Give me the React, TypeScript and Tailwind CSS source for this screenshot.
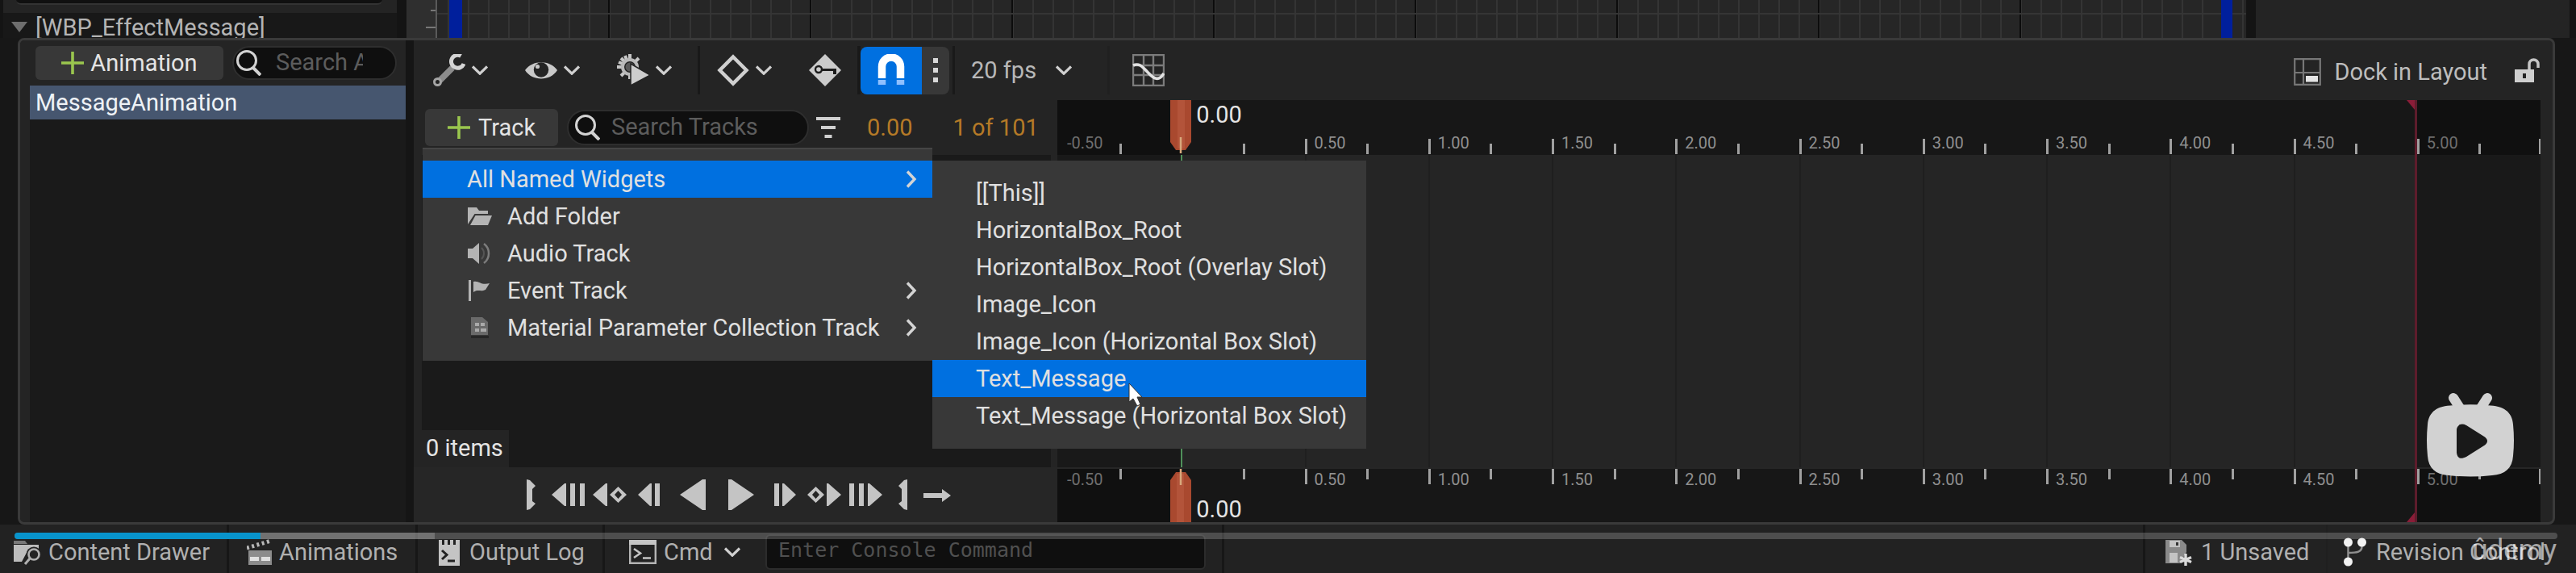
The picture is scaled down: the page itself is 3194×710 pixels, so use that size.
import React from "react";

type IconProps = { className?: string };

const Chevron = ({ className = "" }: IconProps) => (
  <svg viewBox="0 0 20 12" className={`h-3 w-5 shrink-0 ${className}`} fill="none" stroke="#d0d0d0" strokeWidth="3.2">
    <path d="M1 1.5 10 10.2 19 1.5" />
  </svg>
);

const ChevronRight = () => (
  <svg viewBox="0 0 16 22" className="h-[22px] w-4 shrink-0" fill="none" stroke="#d4d4d4" strokeWidth="3.4">
    <path d="M3 1.5 12 11 3 20.5" />
  </svg>
);

const Plus = () => (
  <svg viewBox="0 0 28 28" className="size-7 shrink-0" stroke="#9ac64e" strokeWidth="3.6">
    <path d="M14 0v28M0 14h28" />
  </svg>
);

const Magnifier = () => (
  <svg viewBox="0 0 32 32" className="size-8 shrink-0" fill="none" stroke="#d2d2d2" strokeWidth="3">
    <circle cx="14" cy="13" r="11.5" />
    <path d="M21.5 21.5 31 31" strokeWidth="4" />
  </svg>
);

const Wrench = () => (
  <svg viewBox="0 0 40 40" className="size-10 shrink-0" fill="none">
    <path d="M24 17 8 33" stroke="#8d8d8d" strokeWidth="7.5" />
    <circle cx="5.5" cy="34.5" r="4" stroke="#a5a5a5" strokeWidth="3" fill="#242424" />
    <path d="M34.5 2.3A8 8 0 1 0 38 12" stroke="#d4d4d4" strokeWidth="5" />
  </svg>
);

const Eye = () => (
  <svg viewBox="0 0 40 40" className="size-10 shrink-0">
    <path d="M0 20C9 7 31 7 40 20 31 34 9 34 0 20Z" fill="#c9c9c9" />
    <circle cx="20" cy="19.5" r="9.2" fill="#242424" />
    <circle cx="15.5" cy="15.5" r="2.6" fill="#c9c9c9" />
  </svg>
);

const GearPlay = () => (
  <svg viewBox="0 0 40 40" className="size-10 shrink-0">
    <g stroke="#c6c6c6" strokeWidth="4">
      <path d="M16 0v7M16 25v6M0 16h7M5 5l4 4M27 5l-4 4M5 27l4-4M2 10l5 2M10 2l2 5" />
    </g>
    <circle cx="16" cy="16" r="9" fill="none" stroke="#b9b9b9" strokeWidth="4" />
    <circle cx="16" cy="16" r="5.5" fill="#5a5a5a" />
    <path d="M17 12 41 26 17 39Z" fill="#cdcdcd" stroke="#242424" strokeWidth="1.5" />
  </svg>
);

const Diamond = () => (
  <svg viewBox="0 0 40 40" className="size-10 shrink-0" fill="none" strokeWidth="4.5">
    <path d="M20 3.5 36.5 20 20 36.5 3.5 20Z" stroke="#d0d0d0" />
  </svg>
);

const KeyDiamond = () => (
  <svg viewBox="0 0 40 40" className="size-10 shrink-0">
    <path d="M20 0 40 20 20 40 0 20Z" fill="#cbcbcb" />
    <circle cx="12" cy="19" r="4" fill="none" stroke="#1c1c1c" strokeWidth="2.4" />
    <path d="M16 18h18v7h-4v-4H16Z" fill="#1c1c1c" />
  </svg>
);

const Magnet = () => (
  <svg viewBox="0 0 34 40" className="h-10 w-[34px]" fill="none" strokeWidth="9.5">
    <path d="M5.5 30V15.500a11.500 11.500 0 0 1 23 0V30" stroke="#fff" />
    <path d="M5.5 32v6M28.500 32v6" stroke="#8fc0ff" />
  </svg>
);

const CurveGrid = () => (
  <svg viewBox="0 0 40 40" className="size-10" fill="none">
    <path d="M1 1h38v38H1ZM14 1v38M26 1v38M1 14h38M1 26h38" stroke="#7c7c7c" strokeWidth="2.4" />
    <path d="M1 14C10 10 14 18 20 23.500 27 31 33 34 39 24" stroke="#e2e2e2" strokeWidth="3.600" />
  </svg>
);

const Filter = () => (
  <svg viewBox="0 0 30 26" className="h-[26px] w-[30px]" fill="#d0d0d0">
    <path d="M0 0h30v4H0ZM6 11h18v4H6ZM10.500 22h9v4h-9Z" />
  </svg>
);

const DockIcon = () => (
  <svg viewBox="0 0 34 34" className="size-[34px]">
    <path d="M1.200 1.200h31.600v31.600H1.200ZM12 1v32M1 18h32" fill="none" stroke="#777" strokeWidth="2.200" />
    <path d="M15 22h15v7.500H15Z" fill="#e4e4e4" />
  </svg>
);

const Unlock = () => (
  <svg viewBox="0 0 32 32" className="size-8">
    <path d="M18 16V8.500a5.500 5.500 0 0 1 11 0V13" fill="none" stroke="#c6c6c6" strokeWidth="3.500" />
    <path d="M0 15h24v16H0Z" fill="#cfcfcf" />
    <path d="M10 20h4v6h-4Z" fill="#242424" />
  </svg>
);

const FolderOpen = () => (
  <svg viewBox="0 0 30 24" className="h-6 w-[30px]" fill="#b4b4b4">
    <path d="M0 22V1h11l3 4h11v4H8.500Z" />
    <path d="M9.500 11H30l-5 12H3Z" />
  </svg>
);

const Speaker = () => (
  <svg viewBox="0 0 30 26" className="h-[26px] w-[30px]">
    <path d="M0 7h6l8-7v26l-8-7H0Z" fill="#b4b4b4" />
    <path d="M17 6c4 4 4 10 0 14" fill="none" stroke="#555" strokeWidth="2" />
    <path d="M20 1c8 6 8 18 0 24" fill="none" stroke="#7c7c7c" strokeWidth="2.500" />
  </svg>
);

const Flag = () => (
  <svg viewBox="0 0 30 26" className="h-[26px] w-[30px]" fill="#b4b4b4">
    <path d="M1 0h3v26H1ZM7 2c7-2 9 5 20 2l-5 8c-6 3-9-1-15 3Z" />
  </svg>
);

const ParamFile = () => (
  <svg viewBox="0 0 30 26" className="h-[26px] w-[30px]">
    <path d="M4 0h14l7 6v16H4Z" fill="#6a6a6a" />
    <path d="M9 7h5v4H9ZM16 7h5v4h-5ZM9 14h5v4H9ZM16 14h7v4h-7Z" fill="#aaa" />
    <path d="M4 23h22v3H4Z" fill="#262626" />
  </svg>
);

const DrawerIcon = () => (
  <svg viewBox="0 0 34 34" className="size-[34px]">
    <path d="M0 3h14l3 4H0Z" fill="#777" />
    <path d="M0 8h31v6H18L10 29H0Z" fill="#bdbdbd" />
    <circle cx="25" cy="20" r="9.500" fill="#232323" />
    <circle cx="25" cy="20" r="6.500" fill="none" stroke="#b0b0b0" strokeWidth="2.600" />
    <path d="M20 25l-6 7" stroke="#b0b0b0" strokeWidth="3" />
  </svg>
);

const Clapper = () => (
  <svg viewBox="0 0 32 34" className="h-[34px] w-8">
    <path d="M0 12 30 3" stroke="#b8b8b8" strokeWidth="5" strokeDasharray="3 3.500" />
    <path d="M2 15h29v18H2Z" fill="#8c8c8c" />
    <path d="M4 23h11v5H4ZM18 23h11v5H18Z" fill="#e0e0e0" />
  </svg>
);

const LogIcon = () => (
  <svg viewBox="0 0 26 34" className="h-[34px] w-[26px]">
    <path d="M0 2h4v6h3V2h4v6h3V2h4v6h3V2h5v32H0Z" fill="#c4c4c4" />
    <path d="M4 15l6 5.500L4 26M11 28h9" fill="none" stroke="#222" strokeWidth="3" />
  </svg>
);

const Terminal = () => (
  <svg viewBox="0 0 34 30" className="h-[30px] w-[34px]" fill="none">
    <path d="M1.200 1.200h31.600v27.600H1.200Z" stroke="#b4b4b4" strokeWidth="2.400" />
    <path d="M0 0h34v6H0Z" fill="#c4c4c4" />
    <path d="M6 11l8 5.500L6 22M17 22.500h10" stroke="#c4c4c4" strokeWidth="2.600" />
  </svg>
);

const SaveIcon = () => (
  <svg viewBox="0 0 34 34" className="size-[34px]">
    <path d="M0 2h20l6 6v9l-8 14H0Z" fill="#8a8a8a" />
    <path d="M5 3h13v8H5ZM5 18h10v12H5Z" fill="#c4c4c4" />
    <path d="M13 5h3v4h-3Z" fill="#333" />
    <path d="M25 19v15M18 23.500l14 6M32 23.500l-14 6" stroke="#dadada" strokeWidth="3.400" />
  </svg>
);

const Branch = () => (
  <svg viewBox="0 0 28 36" className="h-9 w-7">
    <path d="M5.500 6v24M22.500 6v5c0 7-6 8-17 8" fill="none" stroke="#8e8e8e" strokeWidth="2.500" />
    <circle cx="5.500" cy="6" r="5.500" fill="#f2f2f2" />
    <circle cx="22.500" cy="6" r="5.500" fill="#f2f2f2" />
    <circle cx="5.500" cy="30" r="5.500" fill="#f2f2f2" />
  </svg>
);

const transport = [
  { label: "Set start", gap: "ml-0", w: 11, d: "M0 0 4 1 11 8 7 12V27L11 30 4 37 0 38Z" },
  { label: "To front", gap: "ml-5", w: 41, d: "M18 5V33L16 33 0 19 16 5ZM23 5h6v28h-6ZM35 5h6v28h-6Z" },
  { label: "Previous key", gap: "ml-2.5", w: 42, d: "M18 5V33L16 33 0 19 16 5ZM31.500 9 42 19 31.500 29 21 19ZM31.500 14 27 19 31.500 24 36 19Z" },
  { label: "Step back", gap: "ml-3.5", w: 28, d: "M17 5V33L15 33 0 19 15 5ZM21 5h6v28h-6Z" },
  { label: "Play backwards", gap: "ml-6", w: 32, d: "M32 0V38L28 38 0 19 28 0Z" },
  { label: "Play", gap: "ml-7", w: 32, d: "M0 0V38L4 38 32 19 4 0Z" },
  { label: "Step forward", gap: "ml-6", w: 28, d: "M11 5V33L13 33 28 19 13 5ZM1 5h6v28H1Z" },
  { label: "Next key", gap: "ml-3.5", w: 42, d: "M24 5V33L26 33 42 19 26 5ZM10.500 9 21 19 10.500 29 0 19ZM10.500 14 6 19 10.500 24 15 19Z" },
  { label: "To end", gap: "ml-2.5", w: 41, d: "M23 5V33L25 33 41 19 25 5ZM0 5h6v28H0ZM12 5h6v28h-6Z" },
  { label: "Set end", gap: "ml-5", w: 11, d: "M11 0 7 1 0 8 4 12V27L0 30 7 37 11 38Z" },
  { label: "No looping", gap: "ml-5", w: 34, d: "M0 17h23v-5l11 8-11 8v-5H0Z" },
];

const ToolButton = ({ label, children }: { label: string; children: React.ReactNode }) => (
  <button aria-label={label} className="flex items-center gap-2">
    {children}
    <Chevron />
  </button>
);

const trackMenu = [
  { text: "Add Folder", icon: <FolderOpen />, sub: false },
  { text: "Audio Track", icon: <Speaker />, sub: false },
  { text: "Event Track", icon: <Flag />, sub: true },
  { text: "Material Parameter Collection Track", icon: <ParamFile />, sub: true },
];

const widgets = [
  "[[This]]",
  "HorizontalBox_Root",
  "HorizontalBox_Root (Overlay Slot)",
  "Image_Icon",
  "Image_Icon (Horizontal Box Slot)",
  "Text_Message",
  "Text_Message (Horizontal Box Slot)",
];

const Menus = () => (
  <div className="absolute top-[59px] left-[11px] z-20 flex items-start text-[#e0e0e0]">
    <div role="menu" aria-label="Add track" className="w-[632px] border-t-2 border-[#454545] bg-[#383838] pt-3.5 pb-[18px]">
      <button role="menuitem" className="flex h-[46px] w-full items-center justify-between bg-[#0070e0] pr-[18px] pl-[55px]">
        All Named Widgets
        <ChevronRight />
      </button>
      {trackMenu.map((m) => (
        <button role="menuitem" key={m.text} className="flex h-[46px] w-full items-center pr-[18px] pl-14">
          {m.icon}
          <span className="ml-[19px] flex-1 text-left">{m.text}</span>
          {m.sub && <ChevronRight />}
        </button>
      ))}
    </div>
    <div role="menu" aria-label="All Named Widgets" className="relative mt-4 w-[538px] bg-[#383838] pt-[17px] pb-[18px]">
      {widgets.map((w) => (
        <button
          role="menuitem"
          key={w}
          className={`flex h-[46px] w-full items-center pl-[54px] ${w === "Text_Message" ? "bg-[#0070e0]" : ""}`}
        >
          {w}
        </button>
      ))}
      <svg viewBox="0 0 18 30" className="absolute top-[275px] left-[243px] h-[30px] w-[18px]">
        <path d="M1 1v23l5-4 5 9 4-2-4-9h6Z" fill="#fff" stroke="#333" strokeWidth="1" />
      </svg>
    </div>
  </div>
);

const times = ["-0.50", "0.00", "0.50", "1.00", "1.50", "2.00", "2.50", "3.00", "3.50", "4.00", "4.50", "5.00"];

const Ruler = ({ bottom = false }: { bottom?: boolean }) => (
  <div className="grid h-[68px] shrink-0 grid-cols-12">
    {times.map((t, i) => {
      const outside = i === 0 || i === 11;
      return (
        <div
          key={t}
          className={`relative flex ${bottom ? "items-start border-t-2 border-[#262626]" : "items-end pb-px"} ${
            outside ? "bg-[#101010]" : "bg-[#171717]"
          }`}
        >
          <div className={`flex w-1/2 ${bottom ? "items-start" : "items-end"}`}>
            <span className={`h-[19px] w-[3px] ${i > 1 ? "bg-[#a0a0a0]" : ""}`} />
            <span className={`pl-[9px] text-[20px] leading-[27px] ${outside ? "text-[#6e6e6e]" : "text-[#8f8f8f]"}`}>
              {i !== 1 && t}
            </span>
          </div>
          <span className="h-[13px] w-[3px] bg-[#a0a0a0]" />
          {i === 11 && <span className="ml-auto h-[19px] w-[2px] bg-[#a0a0a0]" />}
          {i === 1 && (
            <div className={`absolute -left-[13px] z-10 flex gap-1.5 ${bottom ? "top-0 items-end" : "top-0"}`}>
              <svg viewBox="0 0 26 66" className={`h-[66px] w-[26px] ${bottom ? "rotate-180" : ""}`}>
                <path d="M0 0h26v52l-7 10H7L0 52Z" fill="#a9492f" />
                <path d="M9 0h9v60H9Z" fill="#b3543a" />
                <path d="M13 46v20" stroke="#d8a97c" strokeWidth="2.500" />
              </svg>
              <span className={`text-[#e4e4e4] ${bottom ? "" : "pt-0.5"}`}>0.00</span>
            </div>
          )}
        </div>
      );
    })}
  </div>
);

const Timeline = () => (
  <div className="relative flex min-w-0 flex-1 flex-col">
    <Ruler />
    <div className="grid flex-1 grid-cols-12">
      {times.map((t, i) => (
        <div
          key={t}
          className={`border-l-2 ${
            i === 0 || i === 11
              ? "border-transparent bg-[#191919]"
              : i === 1
                ? "border-[#4f8f5a] bg-[#252525]"
                : "border-[#1f1f1f] bg-[#252525]"
          }`}
        />
      ))}
    </div>
    <Ruler bottom />
    <div className="absolute inset-0 z-10 grid grid-cols-12">
      <div className="col-span-11 flex flex-col items-end justify-between border-r-3 border-[#5e1c2c]">
        <svg viewBox="0 0 10 12" className="h-3 w-2.5">
          <path d="M0 0h10v12Z" fill="#8a1d38" />
        </svg>
        <svg viewBox="0 0 10 12" className="h-3 w-2.5">
          <path d="M0 12h10V0Z" fill="#8a1d38" />
        </svg>
      </div>
    </div>
  </div>
);

const AnimationList = () => (
  <div className="flex w-[488px] shrink-0 flex-col border-r-10 border-[#151515] bg-[#242424] pt-[7px]">
    <div className="flex h-[42px] items-center gap-[11px] pr-[11px] pl-[19px]">
      <button className="flex h-[42px] w-[233px] items-center justify-center gap-2 rounded-md bg-[#383838] text-[#e4e4e4]">
        <Plus />
        Animation
      </button>
      <label className="flex h-[42px] min-w-0 flex-1 items-center rounded-full border-2 border-[#2e2e2e] bg-[#0f0f0f] pl-0.5">
        <Magnifier />
        <input
          aria-label="Search Animations"
          placeholder="Search Animations"
          className="ml-[18px] w-[108px] bg-transparent pb-0.5 outline-none placeholder:text-[#5c5c5c]"
        />
      </label>
    </div>
    <ul className="mt-[7px] ml-3 flex-1 bg-[#1a1a1a]">
      <li className="flex h-[42px] items-center bg-[#46566f] pl-[7px] text-[#eef2f6]">MessageAnimation</li>
    </ul>
  </div>
);

const Toolbar = () => (
  <div className="flex h-[74px] shrink-0 items-center pr-[15px] pl-6">
    <div className="flex gap-[46px]">
      <ToolButton label="Actions"><Wrench /></ToolButton>
      <ToolButton label="View options"><Eye /></ToolButton>
      <ToolButton label="Playback options"><GearPlay /></ToolButton>
    </div>
    <span className="mr-[21px] ml-8 h-[60px] w-[3px] bg-[#191919]" />
    <ToolButton label="Keyframe options"><Diamond /></ToolButton>
    <button aria-label="Auto key" className="ml-[46px]"><KeyDiamond /></button>
    <span className="ml-5 h-[60px] w-1 bg-[#191919]" />
    <button aria-label="Snapping" aria-pressed="true" className="flex h-[59px] w-[76px] items-center justify-center rounded-l-lg bg-[#0070e0]">
      <Magnet />
    </button>
    <button aria-label="Snapping options" className="flex h-[59px] w-[34px] items-center justify-center rounded-r-lg bg-[#383838]">
      <svg viewBox="0 0 6 30" className="h-[30px] w-1.5" fill="#d8d8d8">
        <path d="M0 0h6v6H0ZM0 12h6v6H0ZM0 24h6v6H0Z" />
      </svg>
    </button>
    <span className="ml-1 h-[60px] w-[3px] bg-[#191919]" />
    <label className="relative ml-5 flex items-center">
      <select aria-label="Frame rate" className="w-[125px] appearance-none bg-transparent text-[#b8b8b8] outline-none">
        <option>20 fps</option>
      </select>
      <Chevron className="pointer-events-none absolute right-0" />
    </label>
    <span className="mr-7 ml-11 h-[60px] w-[3px] bg-[#202020]" />
    <button aria-label="Curve editor"><CurveGrid /></button>
    <button className="ml-auto flex items-center gap-4 pt-1 text-[#bdbdbd]">
      <DockIcon />
      Dock in Layout
    </button>
    <button aria-label="Unlock" className="ml-[34px]"><Unlock /></button>
  </div>
);

const Tracks = () => (
  <div className="relative flex w-[798px] shrink-0 flex-col">
    <div className="flex h-[68px] shrink-0 items-center pl-3.5">
      <button className="flex h-[46px] w-[165px] items-center justify-center gap-2.5 rounded-md bg-[#383838] text-[#e4e4e4]">
        <Plus />
        Track
      </button>
      <label className="ml-[11px] flex h-11 w-[300px] items-center rounded-full border-2 border-[#2e2e2e] bg-[#0f0f0f] pl-[7px]">
        <Magnifier />
        <input
          aria-label="Search Tracks"
          placeholder="Search Tracks"
          className="ml-3.5 w-[210px] bg-transparent pb-0.5 outline-none placeholder:text-[#5c5c5c]"
        />
      </label>
      <button aria-label="Filter" className="ml-[9px]"><Filter /></button>
      <span className="ml-[33px] text-[#b57a27]">0.00</span>
      <span className="ml-[50px] text-[#b57a27]">1 of 101</span>
    </div>
    <div className="mr-2 ml-2.5 flex flex-1 flex-col justify-end bg-[#1a1a1a]">
      <div className="flex h-[46px] w-[108px] items-center bg-[#242424] pb-0.5 pl-[5px] text-[#e4e4e4]">0 items</div>
    </div>
    <div className="flex h-[68px] shrink-0 items-center bg-[#262626] pl-[140px]">
      {transport.map((t) => (
        <button key={t.label} aria-label={t.label} className={t.gap}>
          <svg viewBox={`0 0 ${t.w} 38`} height="38" width={t.w} fill="#c4c4c4" fillRule="evenodd">
            <path d={t.d} />
          </svg>
        </button>
      ))}
    </div>
    <Menus />
  </div>
);

const Backdrop = () => (
  <div className="flex h-[47px] shrink-0 bg-[#141414]">
    <div className="ml-1 flex w-[488px] shrink-0 flex-col bg-[#242424]">
      <div className="ml-4 h-1.5 w-[454px] rounded-b-full border-b-2 border-[#333] bg-[#101010]" />
      <div className="mt-2.5 flex h-[31px] items-center bg-[#181818] pt-1 pl-2.5 text-[#b4b4b4]">
        <svg viewBox="0 0 20 13" className="mr-2.5 h-[13px] w-5" fill="#6e6e6e">
          <path d="M0 0h20L10 13Z" />
        </svg>
        [WBP_EffectMessage]
      </div>
    </div>
    <div className="ml-3 flex w-9 shrink-0 flex-col items-end justify-between bg-[#2f2f2f] py-3">
      <span className="h-0.5 w-1.5 bg-[#777]" />
      <span className="h-0.5 w-3 bg-[#777]" />
    </div>
    <div className="flex min-w-0 flex-1 justify-between border-l-2 border-[#5a5a5a] bg-[#262626] bg-[linear-gradient(#353535,#353535),repeating-linear-gradient(90deg,transparent_0_212px,#0c0c0c_212px_214px,transparent_214px_250px),repeating-linear-gradient(90deg,transparent_0_13px,#343434_13px_15px,transparent_15px_25px)] bg-[size:100%_2px,auto,auto] bg-[position:0_16px,0_0,0_0] bg-no-repeat pr-[17px] pl-[15px]">
      <span className="w-4 bg-[#001f9c]" />
      <span className="w-[14px] bg-[#001f9c]" />
    </div>
    <div className="mr-2 ml-3 w-[389px] shrink-0 bg-[#242424]" />
  </div>
);

const StatusBar = () => (
  <footer className="relative flex h-[60px] shrink-0 bg-[#222] text-[#b0b0b0]">
    <button className="flex w-[284px] items-center gap-[9px] border-r-3 border-[#171717] pt-2 pl-[17px]">
      <DrawerIcon />
      Content Drawer
    </button>
    <button className="flex w-[234px] items-center gap-2 border-r-3 border-[#171717] pt-2 pl-[22px]">
      <Clapper />
      Animations
    </button>
    <button className="flex w-[232px] items-center gap-3 border-r-3 border-[#171717] pt-2 pl-[26px]">
      <LogIcon />
      Output Log
    </button>
    <div className="flex w-[768px] items-center border-r-3 border-[#171717] pt-2 pl-[30px]">
      <Terminal />
      <label className="relative ml-[9px] flex items-center">
        <select aria-label="Console mode" className="w-[95px] appearance-none bg-transparent outline-none">
          <option>Cmd</option>
        </select>
        <Chevron className="pointer-events-none absolute right-0" />
      </label>
      <input
        aria-label="Console command"
        placeholder="Enter Console Command"
        className="ml-[31px] h-11 w-[546px] rounded-md border-2 border-[#2c2c2c] bg-[#0f0f0f] pb-1.5 pl-3.5 font-['DejaVu_Sans_Mono',monospace] text-[25px] outline-none placeholder:text-[#505050]"
      />
    </div>
    <button className="ml-auto flex w-[227px] items-center gap-2.5 border-l-3 border-[#171717] pt-2 pl-[25px]">
      <SaveIcon />
      1 Unsaved
    </button>
    <button className="flex w-[310px] items-center gap-3 border-l-2 border-[#1f1f1f] pt-2 pl-5">
      <Branch />
      Revision Control
    </button>
    <div
      role="progressbar"
      aria-label="Playback position"
      className="absolute top-2.5 right-[23px] left-[18px] flex h-2 overflow-hidden rounded-sm bg-white/20"
    >
      <span className="w-[305px] bg-[#0894cc]" />
      <span className="w-[216px] bg-white/20" />
    </div>
    <span className="absolute top-3 right-6 text-[35px] leading-10 text-white/60">ûdemy</span>
  </footer>
);

const PlayerBadge = () => (
  <button aria-label="Play video" className="absolute right-[76px] bottom-[119px] z-30">
    <svg viewBox="0 0 110 106" className="h-[106px] w-[110px]">
      <path d="M34 8 43 22M76 8 67 22" stroke="#d2d2d2" strokeWidth="12" strokeLinecap="round" />
      <path
        fillRule="evenodd"
        fill="#d2d2d2"
        d="M30 17.500Q55 15 80 17.500C98 18.500 107 27 108 41Q110 61 108 80C107 95 98 103 82 104Q55 107 28 104C12 103 3 95 2 80Q0 61 2 41C3 27 12 18.500 30 17.500ZM38 47V76C39 84 44 84 50 81L73 66.500C77 63 77 60 73 56.500L50 42C44 39 39 41 38 47Z"
      />
    </svg>
  </button>
);

export default function App() {
  return (
    <div className="relative flex h-screen flex-col overflow-hidden bg-[#151515] font-['Roboto',sans-serif] text-[29px] leading-8 whitespace-nowrap">
      <Backdrop />
      <div className="flex min-h-0 flex-1 bg-[#171717] pr-[26px] pl-[22px]">
        <main className="flex min-w-0 flex-1 overflow-hidden rounded-lg border-3 border-[#3a3a3a] bg-[#242424]">
          <AnimationList />
          <div className="flex min-w-0 flex-1 flex-col">
            <Toolbar />
            <div className="flex min-h-0 flex-1 pr-[15px]">
              <Tracks />
              <Timeline />
            </div>
          </div>
        </main>
      </div>
      <StatusBar />
      <PlayerBadge />
    </div>
  );
}
